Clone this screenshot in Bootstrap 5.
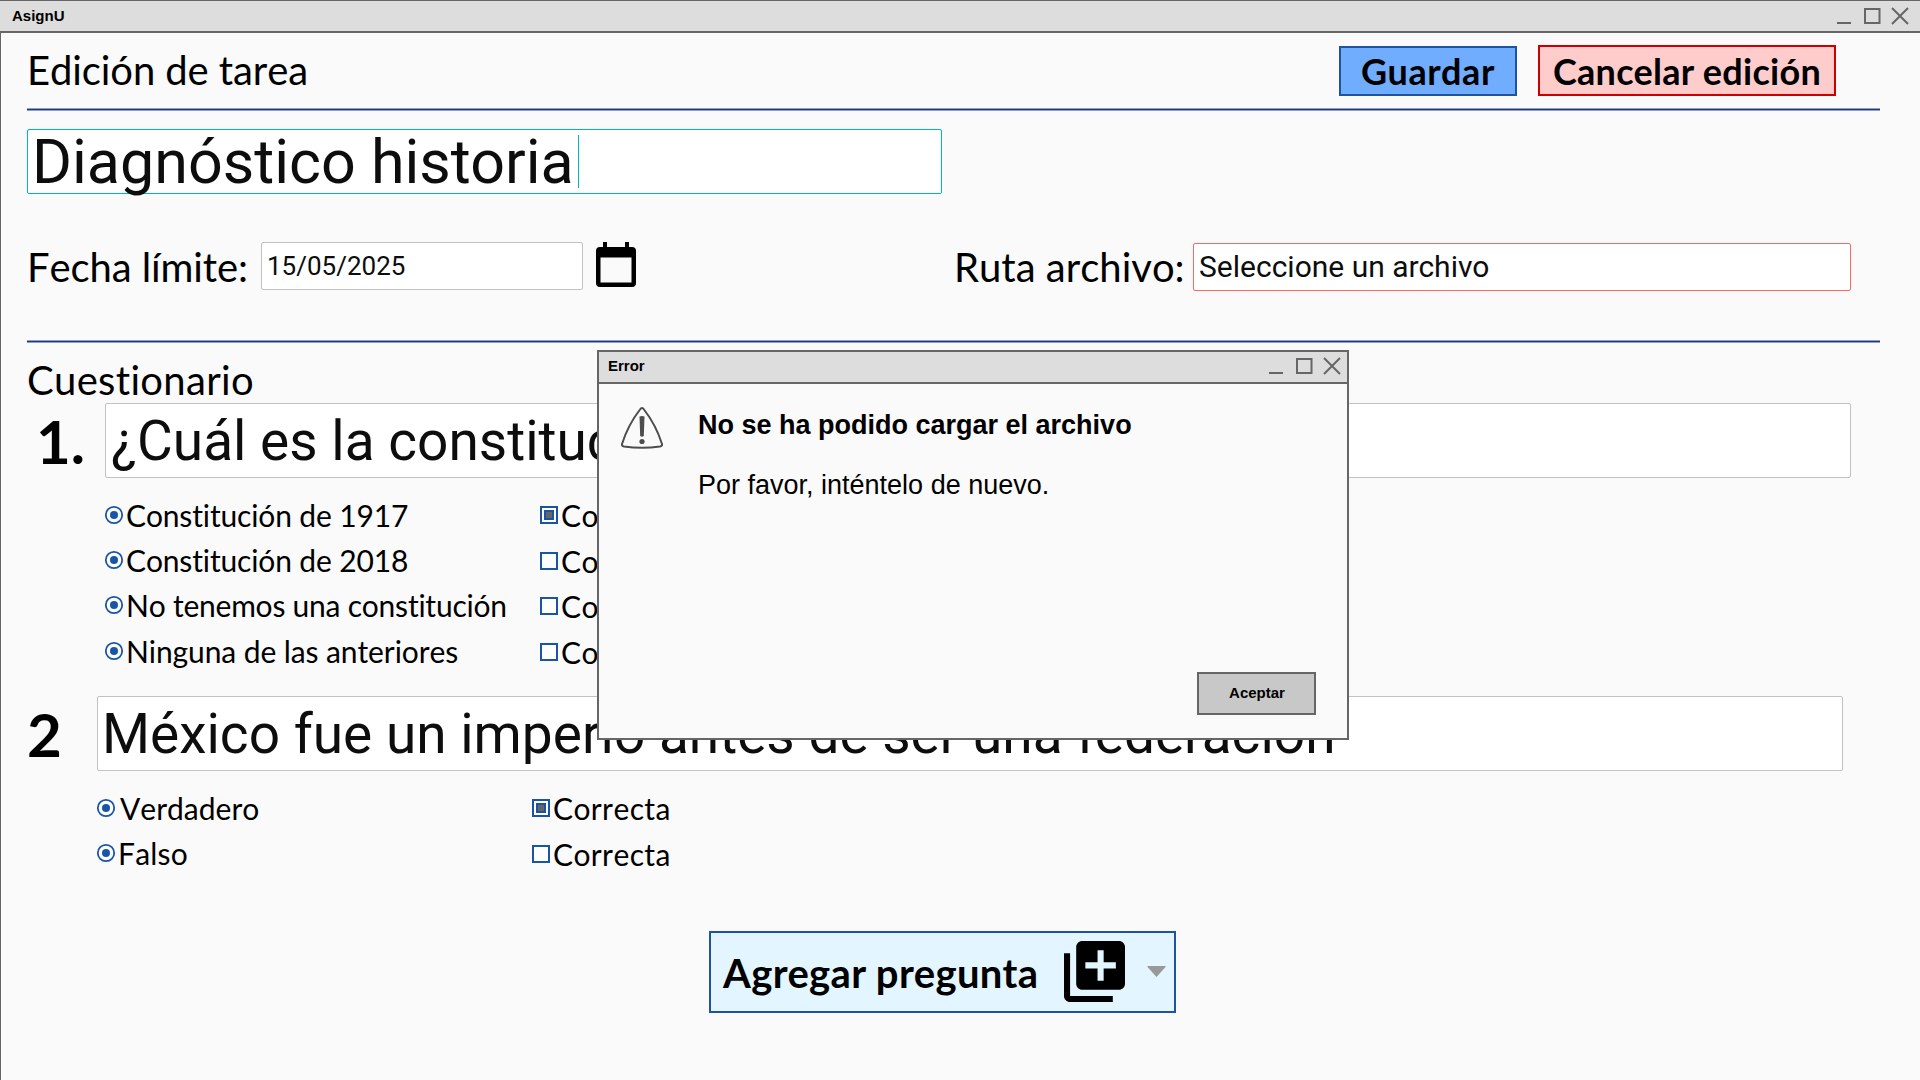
<!DOCTYPE html>
<html lang="es">
<head>
<meta charset="utf-8">
<title>AsignU</title>
<link href="https://cdn.jsdelivr.net/npm/bootstrap@5.3.0/dist/css/bootstrap.min.css" rel="stylesheet">
<style>
body{margin:0;background:#fafafa;color:#000;font-family:Lato,sans-serif;font-variant-ligatures:none;font-kerning:none;overflow:hidden}
svg{display:block;flex:none}
.win{height:1080px;border-left:1px solid #666}
.bar{height:33px;background:#ddd;border-top:1px solid #666;border-bottom:2px solid #666;font:bold 15px/30px "Liberation Sans",Arial,sans-serif}
.bar-main{margin-left:-1px;padding:0 11px 0 12px}
.t40{font-size:40px;line-height:48px;white-space:nowrap;letter-spacing:-.1px}
.t40.wide{letter-spacing:.32px}
.rule{height:3px;width:1853px;background:#1f3a80;border:solid #8f9dc0;border-width:1px 0;flex:none}
.act{border-radius:0;padding:0;font-weight:700;font-size:36px;line-height:44px;color:#000;border:2px solid}
.save{width:178px;height:50px;background:#70adff;border-color:#20539d;margin-top:1px;letter-spacing:.65px}
.cancel{width:298px;height:51px;background:#fcc;border-color:#c00;letter-spacing:.28px;line-height:46px}
.fld{font-family:Roboto,sans-serif;color:#0d0d0d;background:#fff;border:1px solid #c2c2c2;border-radius:2px;padding:0 5px;white-space:nowrap;flex:none;font-kerning:auto}
.fld-title{width:915px;height:65px;border-color:#00b4cc;font-size:61px;line-height:65px;padding-left:4px}
.caret-bar{width:1px;height:53px;background:#00b4cc;margin-left:4px}
.fld-q{width:1746px;height:75px;font-size:55px;line-height:74px}
.num{font-size:60px;font-weight:700;line-height:72px;flex:none}
.opts{font-size:30px;line-height:32px}
.opt{height:45.6px}
.ls-a{letter-spacing:-.14px}
.ls-b{letter-spacing:-.23px}
.ls-c{letter-spacing:-.1px}
.ls-d{letter-spacing:.38px}
.dlg{position:absolute;left:597px;top:350px;width:752px;height:390px;background:#fafafa;border:2px solid #666;font-family:"Liberation Sans",Arial,sans-serif}
.dlg-bar{height:32px;border-top:0;padding:0 6px 0 9px;line-height:28px}
.dlg h2{font-size:27px;font-weight:700;line-height:32px;margin:0}
.dlg p{font-size:27px;line-height:32px;margin:28px 0 0;font-kerning:auto}
.ok{width:119px;height:43px;background:#c8c8c8;border:2px solid #666;border-radius:0;font-size:15px;font-weight:700;line-height:33px;padding:0 0 2px 1px;color:#000}
.add{width:467px;height:82px;background:#e3f6ff;border:2px solid #20539d;border-radius:0;padding:0 8px 0 12px;font-size:40px;font-weight:700;line-height:80px;color:#000;letter-spacing:.38px}
</style>
</head>
<body>
<svg width="0" height="0" class="position-absolute"><defs>
<symbol id="ctl" viewBox="0 0 72 20"><g fill="none" stroke="#666" stroke-width="2"><path d="M0 17h14M55 2l16 16M71 2L55 18"/><rect x="28" y="3" width="14.5" height="14"/></g></symbol>
<symbol id="rad" viewBox="0 0 20 20"><circle cx="10" cy="10" r="8.2" fill="#fff" stroke="#1955a5" stroke-width="1.8"/><circle cx="10" cy="10" r="4" fill="#1955a5"/></symbol>
<symbol id="box" viewBox="0 0 18 18"><rect x="1" y="1" width="16" height="16" fill="#fff" stroke="#1955a5" stroke-width="2"/></symbol>
<symbol id="boxon" viewBox="0 0 18 18"><rect x="1" y="1" width="16" height="16" fill="#fff" stroke="#1955a5" stroke-width="2"/><rect x="5" y="5" width="8" height="8" fill="#666" stroke="#1955a5" stroke-width="2"/></symbol>
</defs></svg>
<div class="win">
  <header class="bar bar-main d-flex justify-content-between"><span>AsignU</span><svg width="72" height="20" style="margin-top:5px"><use href="#ctl"/></svg></header>
  <main style="padding-left:26px">
    <div class="d-flex" style="height:75px;padding-top:12px"><div class="t40 flex-grow-1" style="padding-top:1px">Edición de tarea</div>
      <button class="btn act save" style="margin-right:21px">Guardar</button><button class="btn act cancel" style="margin-right:84px">Cancelar edición</button></div>
    <div class="rule"></div>
    <div class="fld fld-title d-flex" style="margin-top:18px"><span>Diagnóstico historia</span><i class="caret-bar" style="margin-top:5px"></i></div>
    <div class="d-flex" style="margin-top:48px;height:98px">
      <label class="t40" style="width:234px;padding-top:1px">Fecha límite:</label>
      <div class="fld" style="width:322px;height:48px;font-size:26px;line-height:46px">15/05/2025</div>
      <svg width="40" height="45" viewBox="0 0 40 45" style="margin-left:13px"><path fill-rule="evenodd" d="M7 0h4v5h18V0h4v5h3a4 4 0 0 1 4 4v32a4 4 0 0 1-4 4H4a4 4 0 0 1-4-4V9a4 4 0 0 1 4-4h3zM4.500 15.500v25h31v-25z"/></svg>
      <label class="t40" style="margin-left:318px;width:239px;padding-top:1px;letter-spacing:0">Ruta archivo:</label>
      <div class="fld" style="width:658px;height:48px;font-size:30px;line-height:46px;border-color:#f66;margin-top:1px">Seleccione un archivo</div>
    </div>
    <div class="rule"></div>
    <div class="t40 wide" style="height:60px;padding-top:13px">Cuestionario</div>
    <section class="d-flex">
      <div class="num" style="width:78px;padding:2px 0 0 9px">1.</div>
      <div><div class="fld fld-q">¿Cuál es la constitución vigente?</div>
        <div class="opts d-flex" style="padding-top:21px">
          <div style="width:436px;margin-left:-1px">
            <div class="opt d-flex"><svg width="20" height="20" style="margin-top:6px"><use href="#rad"/></svg><span class="ls-a" style="padding-left:2px">Constitución de 1917</span></div>
            <div class="opt d-flex" style="height:44.600px;margin:-1px 0 1px"><svg width="20" height="20" style="margin-top:6px"><use href="#rad"/></svg><span class="ls-a" style="padding-left:2px">Constitución de 2018</span></div>
            <div class="opt d-flex" style="margin-top:1px"><svg width="20" height="20" style="margin-top:6px"><use href="#rad"/></svg><span class="ls-b" style="padding-left:2px">No tenemos una constitución</span></div>
            <div class="opt d-flex"><svg width="20" height="20" style="margin-top:6px"><use href="#rad"/></svg><span class="ls-c" style="padding-left:2px">Ninguna de las anteriores</span></div>
          </div>
          <div class="ls-d">
            <div class="opt d-flex"><svg width="18" height="18" style="margin-top:7px"><use href="#boxon"/></svg><span style="padding-left:3px">Correcta</span></div>
            <div class="opt d-flex"><svg width="18" height="18" style="margin-top:7px"><use href="#box"/></svg><span style="padding-left:3px">Correcta</span></div>
            <div class="opt d-flex"><svg width="18" height="18" style="margin-top:7px"><use href="#box"/></svg><span style="padding-left:3px">Correcta</span></div>
            <div class="opt d-flex"><svg width="18" height="18" style="margin-top:7px"><use href="#box"/></svg><span style="padding-left:3px">Correcta</span></div>
          </div>
        </div>
      </div>
    </section>
    <section class="d-flex" style="margin-top:15px">
      <div class="num" style="width:70px;padding-top:2px">2</div>
      <div><div class="fld fld-q" style="padding-left:4px">México fue un imperio antes de ser una federación</div>
        <div class="opts d-flex" style="padding-top:21px">
          <div style="width:436px;margin-left:-1px">
            <div class="opt d-flex"><svg width="20" height="20" style="margin-top:6px"><use href="#rad"/></svg><span style="padding-left:4px">Verdadero</span></div>
            <div class="opt d-flex" style="margin-top:-.600px"><svg width="20" height="20" style="margin-top:6px"><use href="#rad"/></svg><span style="padding-left:2px;letter-spacing:.2px">Falso</span></div>
          </div>
          <div class="ls-d">
            <div class="opt d-flex"><svg width="18" height="18" style="margin-top:7px"><use href="#boxon"/></svg><span style="padding-left:3px">Correcta</span></div>
            <div class="opt d-flex"><svg width="18" height="18" style="margin-top:7px"><use href="#box"/></svg><span style="padding-left:3px">Correcta</span></div>
          </div>
        </div>
      </div>
    </section>
    <button class="btn add d-flex" style="margin:47px 0 0 682px"><span class="flex-grow-1 text-start">Agregar pregunta</span>
      <svg width="61" height="61" viewBox="2 2 20 20" style="margin:8px 22px 0 0"><path d="M4 6H2v14c0 1.100.900 2 2 2h14v-2H4V6zm16-4H8c-1.100 0-2 .900-2 2v12c0 1.100.900 2 2 2h12c1.100 0 2-.900 2-2V4c0-1.100-.900-2-2-2zm-1 9h-4v4h-2v-4H9V9h4V5h2v4h4v2z"/></svg>
      <svg width="19" height="11" viewBox="0 0 19 11" style="margin-top:33px"><path fill="#999" d="M1 0h17q1 0 .5 1L9.500 11 .5 1Q0 0 1 0z"/></svg>
    </button>
  </main>
</div>
<div class="dlg d-flex flex-column">
  <div class="bar dlg-bar d-flex justify-content-between"><span>Error</span><svg width="72" height="20" style="margin-top:4px"><use href="#ctl"/></svg></div>
  <div class="d-flex flex-grow-1">
    <svg width="42" height="42" viewBox="0 0 42 42" style="margin:23px 35px 0 22px" fill="none" stroke="#4d4d4d" stroke-width="2"><path d="M19 2.500q2-3 4 0Q35 18 41 37q.5 2-2 2.500-18 2.500-36 0-2.500-.5-2-2.500Q7 18 19 2.500z"/><path fill="#4d4d4d" stroke="none" d="M18.500 9.500q2.500-1.200 5 0L22.800 29q-1.800 1.500-3.600 0z"/><circle cx="21" cy="34.500" r="2.600" fill="#4d4d4d" stroke="none"/></svg>
    <div style="padding-top:25px"><h2>No se ha podido cargar el archivo</h2><p>Por favor, inténtelo de nuevo.</p></div>
  </div>
  <div class="text-end" style="padding:0 31px 23px 0"><button class="btn ok">Aceptar</button></div>
</div>
<script src="https://cdn.jsdelivr.net/npm/bootstrap@5.3.0/dist/js/bootstrap.bundle.min.js"></script>
</body>
</html>
